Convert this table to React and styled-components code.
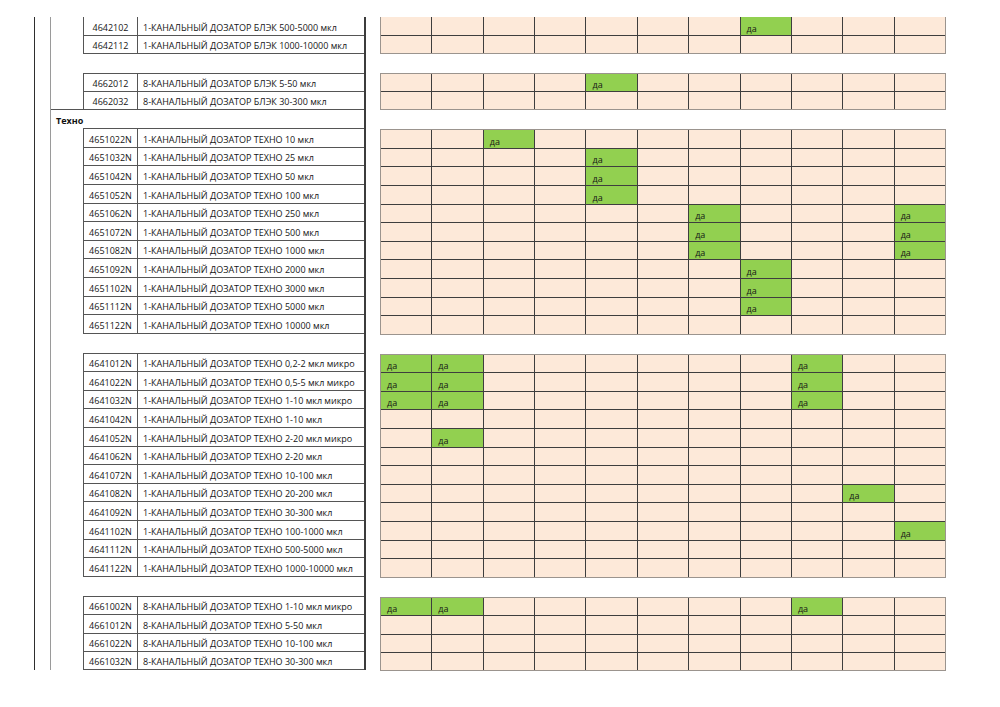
import React from "react";
import styled, { createGlobalStyle } from "styled-components";

const ROW_H = 18.7;

const GlobalStyle = createGlobalStyle`
  html, body {
    margin: 0;
    padding: 0;
    background: #fff;
  }
  body {
    font-family: "Open Sans", "Liberation Sans", sans-serif;
    color: #161616;
  }
`;

const Sheet = styled.div`
  display: flex;
  padding-top: 17px;
  width: 1000px;
  height: 707px;
  box-sizing: border-box;
  overflow: hidden;
`;

const Frame = styled.div`
  margin-left: 34px;
  padding-left: 15px;
  border-left: 1px solid #2e2e2e;
  align-self: flex-start;
`;

const Inner = styled.div`
  width: 316px;
  box-sizing: border-box;
  border-left: 1px solid #9a9a9a;
  border-right: 2px solid #3c3c3c;
  display: flex;
  flex-direction: column;
`;

const Marks = styled.div`
  margin-left: 14px;
  width: 566px;
  display: flex;
  flex-direction: column;
`;

const Spacer = styled.div`
  height: ${ROW_H}px;
`;

const SectionTitle = styled.div`
  height: ${ROW_H}px;
  box-sizing: border-box;
  margin-top: -1px;
  border-top: 1px solid #555;
  padding: 0 0 2px 5px;
  display: flex;
  align-items: flex-end;
  font-size: 9px;
  line-height: 11px;
  font-weight: 700;
  color: #111;
`;

const ListTable = styled.div`
  margin-left: 32px;
  height: ${(p) => p.$rows * ROW_H}px;
  box-sizing: border-box;
  display: grid;
  grid-template-columns: 53px 1fr;
  grid-auto-rows: 1fr;
  gap: 1px;
  background: #555;
  border-left: 1px solid #555;
  border-bottom: 1px solid #555;
  border-top: ${(p) => (p.$open ? "none" : "1px solid #555")};
`;

const Cell = styled.div`
  background: #fff;
  display: flex;
  align-items: flex-end;
  padding-bottom: 2px;
  font-size: 9px;
  line-height: 11px;
  white-space: nowrap;
  overflow: hidden;
`;

const CodeCell = styled(Cell)`
  justify-content: center;
`;

const NameCell = styled(Cell)`
  padding-left: 5px;
`;

const MarkTable = styled.div`
  height: ${(p) => p.$rows * ROW_H}px;
  box-sizing: border-box;
  display: grid;
  grid-template-columns: repeat(11, 1fr);
  grid-auto-rows: 1fr;
  gap: 1px;
  background: #3e3e3e;
  border: 1px solid #9b948e;
  border-top: ${(p) => (p.$open ? "none" : "1px solid #9b948e")};
`;

const Mark = styled.div`
  background: ${(p) => (p.$yes ? "#92d050" : "#fde9d9")};
  display: flex;
  align-items: flex-end;
  padding: 0 0 1px 6px;
  font-size: 9px;
  line-height: 11px;
  color: #161616;
`;

const sections = [
  {
    type: "group",
    open: true,
    rows: [
      ["4642102", "1-КАНАЛЬНЫЙ ДОЗАТОР БЛЭК 500-5000 мкл", [7]],
      ["4642112", "1-КАНАЛЬНЫЙ ДОЗАТОР БЛЭК 1000-10000 мкл", []],
    ],
  },
  { type: "gap" },
  {
    type: "group",
    rows: [
      ["4662012", "8-КАНАЛЬНЫЙ ДОЗАТОР БЛЭК 5-50 мкл", [4]],
      ["4662032", "8-КАНАЛЬНЫЙ ДОЗАТОР БЛЭК 30-300 мкл", []],
    ],
  },
  { type: "title", text: "Техно" },
  {
    type: "group",
    rows: [
      ["4651022N", "1-КАНАЛЬНЫЙ ДОЗАТОР ТЕХНО 10 мкл", [2]],
      ["4651032N", "1-КАНАЛЬНЫЙ ДОЗАТОР ТЕХНО 25 мкл", [4]],
      ["4651042N", "1-КАНАЛЬНЫЙ ДОЗАТОР ТЕХНО 50 мкл", [4]],
      ["4651052N", "1-КАНАЛЬНЫЙ ДОЗАТОР ТЕХНО 100 мкл", [4]],
      ["4651062N", "1-КАНАЛЬНЫЙ ДОЗАТОР ТЕХНО 250 мкл", [6, 10]],
      ["4651072N", "1-КАНАЛЬНЫЙ ДОЗАТОР ТЕХНО 500 мкл", [6, 10]],
      ["4651082N", "1-КАНАЛЬНЫЙ ДОЗАТОР ТЕХНО 1000 мкл", [6, 10]],
      ["4651092N", "1-КАНАЛЬНЫЙ ДОЗАТОР ТЕХНО 2000 мкл", [7]],
      ["4651102N", "1-КАНАЛЬНЫЙ ДОЗАТОР ТЕХНО 3000 мкл", [7]],
      ["4651112N", "1-КАНАЛЬНЫЙ ДОЗАТОР ТЕХНО 5000 мкл", [7]],
      ["4651122N", "1-КАНАЛЬНЫЙ ДОЗАТОР ТЕХНО 10000 мкл", []],
    ],
  },
  { type: "gap" },
  {
    type: "group",
    rows: [
      ["4641012N", "1-КАНАЛЬНЫЙ ДОЗАТОР ТЕХНО 0,2-2 мкл микро", [0, 1, 8]],
      ["4641022N", "1-КАНАЛЬНЫЙ ДОЗАТОР ТЕХНО 0,5-5 мкл микро", [0, 1, 8]],
      ["4641032N", "1-КАНАЛЬНЫЙ ДОЗАТОР ТЕХНО 1-10 мкл микро", [0, 1, 8]],
      ["4641042N", "1-КАНАЛЬНЫЙ ДОЗАТОР ТЕХНО 1-10 мкл", []],
      ["4641052N", "1-КАНАЛЬНЫЙ ДОЗАТОР ТЕХНО 2-20 мкл микро", [1]],
      ["4641062N", "1-КАНАЛЬНЫЙ ДОЗАТОР ТЕХНО 2-20 мкл", []],
      ["4641072N", "1-КАНАЛЬНЫЙ ДОЗАТОР ТЕХНО 10-100 мкл", []],
      ["4641082N", "1-КАНАЛЬНЫЙ ДОЗАТОР ТЕХНО 20-200 мкл", [9]],
      ["4641092N", "1-КАНАЛЬНЫЙ ДОЗАТОР ТЕХНО 30-300 мкл", []],
      ["4641102N", "1-КАНАЛЬНЫЙ ДОЗАТОР ТЕХНО 100-1000 мкл", [10]],
      ["4641112N", "1-КАНАЛЬНЫЙ ДОЗАТОР ТЕХНО 500-5000 мкл", []],
      ["4641122N", "1-КАНАЛЬНЫЙ ДОЗАТОР ТЕХНО 1000-10000 мкл", []],
    ],
  },
  { type: "gap" },
  {
    type: "group",
    rows: [
      ["4661002N", "8-КАНАЛЬНЫЙ ДОЗАТОР ТЕХНО 1-10 мкл микро", [0, 1, 8]],
      ["4661012N", "8-КАНАЛЬНЫЙ ДОЗАТОР ТЕХНО 5-50 мкл", []],
      ["4661022N", "8-КАНАЛЬНЫЙ ДОЗАТОР ТЕХНО 10-100 мкл", []],
      ["4661032N", "8-КАНАЛЬНЫЙ ДОЗАТОР ТЕХНО 30-300 мкл", []],
    ],
  },
];

const COLS = 11;

const ListGroup = ({ rows, open }) => (
  <ListTable $rows={rows.length} $open={open}>
    {rows.map(([code, name]) => (
      <React.Fragment key={code}>
        <CodeCell>{code}</CodeCell>
        <NameCell>{name}</NameCell>
      </React.Fragment>
    ))}
  </ListTable>
);

const MarkGroup = ({ rows, open }) => (
  <MarkTable $rows={rows.length} $open={open}>
    {rows.map(([code, , yes]) =>
      Array.from({ length: COLS }, (_, i) => {
        const on = yes.includes(i);
        return (
          <Mark key={code + i} $yes={on}>
            {on ? "да" : ""}
          </Mark>
        );
      })
    )}
  </MarkTable>
);

export default function App() {
  return (
    <>
      <GlobalStyle />
      <Sheet>
        <Frame>
          <Inner>
            {sections.map((s, idx) => {
              if (s.type === "group")
                return <ListGroup key={idx} rows={s.rows} open={s.open} />;
              if (s.type === "title")
                return <SectionTitle key={idx}>{s.text}</SectionTitle>;
              return <Spacer key={idx} />;
            })}
          </Inner>
        </Frame>
        <Marks>
          {sections.map((s, idx) =>
            s.type === "group" ? (
              <MarkGroup key={idx} rows={s.rows} open={s.open} />
            ) : (
              <Spacer key={idx} />
            )
          )}
        </Marks>
      </Sheet>
    </>
  );
}
